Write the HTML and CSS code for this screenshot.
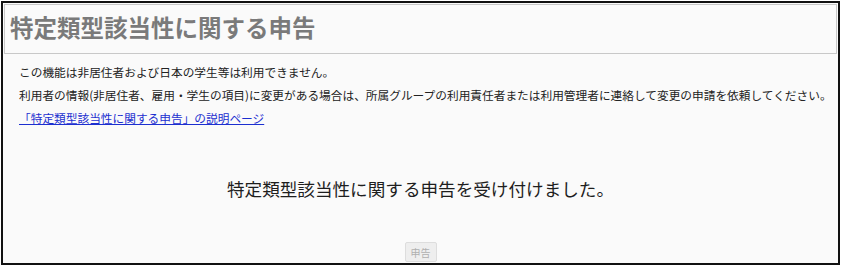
FILE: index.html
```html
<!DOCTYPE html>
<html lang="ja">
<head>
<meta charset="utf-8">
<title>特定類型該当性に関する申告</title>
<link rel="stylesheet" href="styles.css">
</head>
<body>
<div class="frame">
  <div class="title-box">
    <h1 class="title">特定類型該当性に関する申告</h1>
  </div>
  <div class="notes">
    <p class="note">この機能は非居住者および日本の学生等は利用できません。</p>
    <p class="note">利用者の情報(非居住者、雇用・学生の項目)に変更がある場合は、所属グループの利用責任者または利用管理者に連絡して変更の申請を依頼してください。</p>
    <p class="note"><a class="help-link" href="#">「特定類型該当性に関する申告」の説明ページ</a></p>
  </div>
  <p class="message">特定類型該当性に関する申告を受け付けました。</p>
  <div class="actions">
    <button class="submit" type="button" disabled>申告</button>
  </div>
</div>
</body>
</html>
```

FILE: styles.css
```css
html, body {
  margin: 0;
  padding: 0;
  background: #ffffff;
}

body {
  padding: 1px 0 0 1px;
  font-family: "Noto Sans CJK JP", "Noto Sans", sans-serif;
  color: #222222;
}

.frame {
  box-sizing: border-box;
  width: 839px;
  height: 264px;
  border: 2px solid #111111;
  background: #fafafa;
  padding: 1px 1px 0 1px;
  display: flex;
  flex-direction: column;
}

.title-box {
  box-sizing: border-box;
  height: 50px;
  border: 1px solid #c8c8c8;
  background: #fafafa;
  display: flex;
  align-items: center;
  padding: 0 0 3px 5px;
}

.title {
  margin: 0;
  font-size: 23.5px;
  font-weight: bold;
  color: #7a7a7a;
  line-height: 1;
  letter-spacing: 0;
}

.notes {
  padding: 6px 0 0 15px;
}

.note {
  margin: 0;
  font-size: 11.7px;
  line-height: 23px;
}

.help-link {
  color: #1c2fd0;
  text-decoration: underline;
}

.message {
  margin: 48px 0 0 0;
  text-align: center;
  font-size: 17.6px;
  line-height: 24px;
  color: #1e1e1e;
}

.actions {
  margin-top: auto;
  display: flex;
  justify-content: center;
  padding-bottom: 1px;
}

.submit {
  box-sizing: border-box;
  width: 32px;
  height: 20px;
  padding: 0;
  font-family: "Noto Sans CJK JP", sans-serif;
  font-size: 10px;
  color: #b0b0b0;
  background: #eeeeee;
  border: 1px solid #dddddd;
  border-radius: 2px;
}
```
